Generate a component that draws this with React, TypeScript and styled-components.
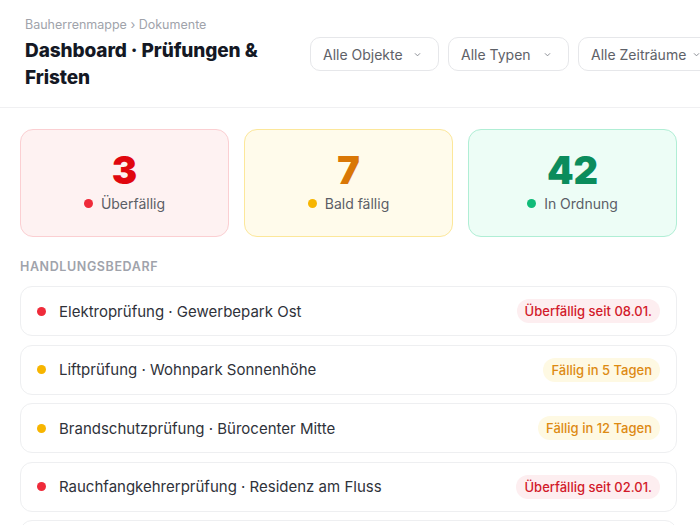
import React from "react";
import styled, { createGlobalStyle } from "styled-components";

const GlobalStyle = createGlobalStyle`
  html, body {
    margin: 0;
    padding: 0;
    background: #ffffff;
    overflow: hidden;
  }
  body {
    font-family: Inter, "Noto Sans", sans-serif;
    color: #1f2430;
  }
`;

type Tone = "red" | "yellow" | "green";

const tones = {
  red: { bg: "#fef2f2", border: "#fbcfd2", text: "#e0070f", dot: "#ef2b3a", badgeBg: "#fdeef0", badgeText: "#d21a2a" },
  yellow: { bg: "#fffbeb", border: "#fce79a", text: "#d97706", dot: "#f7b500", badgeBg: "#fef9e3", badgeText: "#dd8a12" },
  green: { bg: "#edfdf6", border: "#b0eed5", text: "#0b8c5c", dot: "#10bb78", badgeBg: "#e9fbf2", badgeText: "#0b8c5c" },
};

const Page = styled.div`
  width: 700px;
  height: 525px;
  overflow: hidden;
`;

const Header = styled.header`
  display: flex;
  align-items: flex-start;
  gap: 26px;
  padding: 17px 0 16px 25px;
  border-bottom: 1px solid #f0f0f2;
`;

const TitleBlock = styled.div`
  width: 259px;
  flex-shrink: 0;
`;

const Breadcrumb = styled.div`
  font-size: 12.5px;
  color: #a0a3ab;
  line-height: 16px;
  margin-bottom: 4px;
`;

const Title = styled.h1`
  margin: 0;
  font-size: 19px;
  font-weight: 800;
  line-height: 27px;
  color: #141824;
  letter-spacing: -0.1px;
`;

const Filters = styled.div`
  display: flex;
  gap: 9px;
  margin-top: 20px;
  flex-shrink: 0;
`;

const FilterButton = styled.button<{ $w: number }>`
  display: flex;
  align-items: center;
  justify-content: space-between;
  width: ${(p) => p.$w}px;
  height: 34px;
  padding: 0 16px 0 12px;
  box-sizing: border-box;
  border: 1px solid #e6e7ea;
  border-radius: 10px;
  background: #fff;
  font-family: inherit;
  font-size: 14px;
  color: #5e6168;
`;

const Content = styled.main`
  padding: 21px 23px 0 20px;
`;

const Stats = styled.div`
  display: grid;
  grid-template-columns: repeat(3, 1fr);
  gap: 15px;
`;

const StatCard = styled.div<{ $tone: Tone }>`
  height: 108px;
  box-sizing: border-box;
  border: 1px solid ${(p) => tones[p.$tone].border};
  background: ${(p) => tones[p.$tone].bg};
  border-radius: 13px;
  display: flex;
  flex-direction: column;
  align-items: center;
  justify-content: center;
  gap: 3px;
  padding-bottom: 6px;
`;

const StatNumber = styled.div<{ $tone: Tone }>`
  font-size: 38px;
  font-weight: 900;
  line-height: 44px;
  color: ${(p) => tones[p.$tone].text};
`;

const StatLabel = styled.div`
  display: flex;
  align-items: center;
  gap: 8px;
  font-size: 14px;
  color: #5b5e66;
`;

const Dot = styled.span<{ $tone: Tone }>`
  width: 9px;
  height: 9px;
  border-radius: 50%;
  background: ${(p) => tones[p.$tone].dot};
  flex-shrink: 0;
`;

const SectionTitle = styled.div`
  margin: 22px 0 12px;
  font-size: 12.5px;
  font-weight: 600;
  letter-spacing: 0.6px;
  color: #a0a3ab;
`;

const List = styled.div`
  display: flex;
  flex-direction: column;
  gap: 8.5px;
`;

const Row = styled.div`
  display: flex;
  align-items: center;
  height: 50px;
  box-sizing: border-box;
  padding: 0 16px;
  border: 1px solid #eeeff1;
  border-radius: 12px;
  background: #fff;
  gap: 13px;
`;

const RowText = styled.div`
  flex: 1;
  font-size: 15px;
  color: #2f323a;
`;

const Badge = styled.span<{ $tone: Tone }>`
  padding: 4px 8px;
  border-radius: 999px;
  font-size: 13px;
  font-weight: 500;
  background: ${(p) => tones[p.$tone].badgeBg};
  color: ${(p) => tones[p.$tone].badgeText};
`;

const Chevron = () => (
  <svg width="9" height="9" viewBox="0 0 10 10" fill="none">
    <path d="M2.5 4 L5 6.5 L7.5 4" stroke="#8a8d94" strokeWidth="1.1" strokeLinecap="round" strokeLinejoin="round" />
  </svg>
);

const stats: { tone: Tone; value: string; label: string }[] = [
  { tone: "red", value: "3", label: "Überfällig" },
  { tone: "yellow", value: "7", label: "Bald fällig" },
  { tone: "green", value: "42", label: "In Ordnung" },
];

const items: { tone: Tone; text: string; badge: string }[] = [
  { tone: "red", text: "Elektroprüfung · Gewerbepark Ost", badge: "Überfällig seit 08.01." },
  { tone: "yellow", text: "Liftprüfung · Wohnpark Sonnenhöhe", badge: "Fällig in 5 Tagen" },
  { tone: "yellow", text: "Brandschutzprüfung · Bürocenter Mitte", badge: "Fällig in 12 Tagen" },
  { tone: "red", text: "Rauchfangkehrerprüfung · Residenz am Fluss", badge: "Überfällig seit 02.01." },
  { tone: "yellow", text: "Gasprüfung · Stadthaus Nord", badge: "Fällig in 18 Tagen" },
];

const filters = [
  { label: "Alle Objekte", w: 129 },
  { label: "Alle Typen", w: 121 },
  { label: "Alle Zeiträume", w: 140 },
];

export default function App() {
  return (
    <Page>
      <GlobalStyle />
      <Header>
        <TitleBlock>
          <Breadcrumb>Bauherrenmappe › Dokumente</Breadcrumb>
          <Title>Dashboard · Prüfungen &amp; Fristen</Title>
        </TitleBlock>
        <Filters>
          {filters.map((f) => (
            <FilterButton key={f.label} $w={f.w}>
              {f.label}
              <Chevron />
            </FilterButton>
          ))}
        </Filters>
      </Header>
      <Content>
        <Stats>
          {stats.map((s) => (
            <StatCard key={s.label} $tone={s.tone}>
              <StatNumber $tone={s.tone}>{s.value}</StatNumber>
              <StatLabel>
                <Dot $tone={s.tone} />
                {s.label}
              </StatLabel>
            </StatCard>
          ))}
        </Stats>
        <SectionTitle>HANDLUNGSBEDARF</SectionTitle>
        <List>
          {items.map((it) => (
            <Row key={it.text}>
              <Dot $tone={it.tone} />
              <RowText>{it.text}</RowText>
              <Badge $tone={it.tone}>{it.badge}</Badge>
            </Row>
          ))}
        </List>
      </Content>
    </Page>
  );
}
